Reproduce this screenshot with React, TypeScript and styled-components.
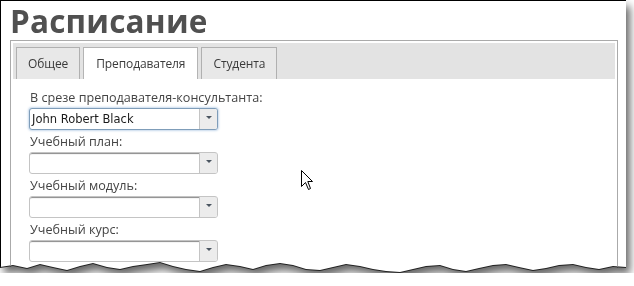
import React from "react";
import styled, { createGlobalStyle } from "styled-components";

const GlobalStyle = createGlobalStyle`
  body {
    margin: 0;
    background: #fff;
  }
`;

// jagged torn-paper bottom edge
const tornPoints = (() => {
	const pts: string[] = ["0 0", "626px 0"];
	const ys = [267, 265, 268, 264, 267, 270, 266, 263, 267, 269, 266, 264, 262, 266, 269, 271, 267, 264, 266, 269, 265, 263, 265, 269, 270, 267, 264, 266, 269, 271, 272, 269, 266, 265, 269, 271, 268, 265, 264, 267, 270, 268, 265, 264, 267, 269, 266, 267];
	const n = ys.length;
	for (let i = n - 1; i >= 0; i--) {
		const x = Math.round((626 * i) / (n - 1));
		pts.push(`${x}px ${ys[i]}px`);
	}
	return pts.join(", ");
})();

interface Field {
	label: string,
	value?: string,
	focused?: boolean
}

const fields: Field[] = [
	{ label: "В срезе преподавателя-консультанта:", value: "John Robert Black", focused: true },
	{ label: "Учебный план:" },
	{ label: "Учебный модуль:" },
	{ label: "Учебный курс:" },
];

const tabs = ["Общее", "Преподавателя", "Студента"];

const App = () => {
	return (
		<>
			<GlobalStyle />
			<Frame>
				<Paper>
					<Title>Расписание</Title>
					<TabsBox>
						<TabBar>
							{tabs.map((t) => (
								<Tab key={t} $active={t === "Преподавателя"}>{t}</Tab>
							))}
						</TabBar>
						<Panel>
							{fields.map((f) => (
								<FieldRow key={f.label}>
									<FieldLabel>{f.label}</FieldLabel>
									<Select $focused={!!f.focused}>
										<SelectText>{f.value}</SelectText>
										<ArrowButton>
											<Triangle />
										</ArrowButton>
									</Select>
								</FieldRow>
							))}
						</Panel>
					</TabsBox>
					<Cursor width="13" height="21" viewBox="0 0 13 21">
						<path d="M0.5 0.5 L0.5 16.5 L4.5 12.5 L7.5 19.5 L9.5 18.5 L6.8 11.5 L11.5 11.5 Z" fill="#fff" stroke="#000" strokeWidth="1" />
					</Cursor>
				</Paper>
			</Frame>
		</>
	)
};

const Frame = styled.div`
  width: 626px;
  filter: drop-shadow(0 1px 0 #222) drop-shadow(4px 6px 4px rgba(0, 0, 0, 0.6));
`;

const Paper = styled.div`
  position: relative;
  height: 273px;
  box-sizing: border-box;
  background: #fff;
  border-left: 1px solid #000;
  border-top: 1px solid #000;
  padding: 0 8px 0 9px;
  overflow: hidden;
  clip-path: polygon(${tornPoints});
`;

const Title = styled.h1`
  margin: 0;
  padding-top: 1px;
  font-family: "Open Sans", "DejaVu Sans", sans-serif;
  font-weight: 700;
  font-size: 31.5px;
  line-height: 38px;
  color: #505050;
  letter-spacing: 0.2px;
`;

const TabsBox = styled.div`
  border: 1px solid #aaa;
  border-bottom: none;
  padding: 2px 2px 0;
  height: 260px;
  box-sizing: border-box;
`;

const TabBar = styled.div`
  display: flex;
  align-items: flex-end;
  gap: 3px;
  height: 36px;
  box-sizing: border-box;
  padding: 4px 3px 0;
  background: #e3e3e3;
`;

const Tab = styled.div<{ $active: boolean }>`
  height: 32px;
  box-sizing: border-box;
  padding: 0 ${(p) => (p.$active ? "12px" : "11px")};
  display: flex;
  align-items: center;
  border: 1px solid ${(p) => (p.$active ? "#b4b4b4" : "#b0b0b0")};
  border-bottom: none;
  background: ${(p) => (p.$active ? "#fff" : "#e8e8e8")};
  font-family: "Open Sans", "DejaVu Sans", sans-serif;
  font-size: 12px;
  color: #3a3a3a;
  letter-spacing: -0.1px;
`;

const Panel = styled.div`
  padding: 9px 0 0 17px;
  display: flex;
  flex-direction: column;
`;

const FieldRow = styled.div`
  display: flex;
  flex-direction: column;
  margin-bottom: 2px;
`;

const FieldLabel = styled.div`
  font-family: "Open Sans", "DejaVu Sans", sans-serif;
  font-size: 12.6px;
  line-height: 20px;
  color: #444;
`;

const Select = styled.div<{ $focused: boolean }>`
  width: 189px;
  height: 22px;
  box-sizing: border-box;
  margin-left: -1px;
  display: flex;
  border: 1px solid ${(p) => (p.$focused ? "#7f9db9" : "#c4c4c4")};
  border-radius: 3px;
  background: #fff;
  box-shadow: ${(p) =>
		p.$focused
			? "0 0 2px 1px rgba(130, 170, 210, 0.45)"
			: "inset 0 2px 1px -1px #8a8a8a"};
  overflow: hidden;
`;

const SelectText = styled.div`
  flex: 1;
  padding-left: 2px;
  font-family: "DejaVu Sans", Verdana, sans-serif;
  font-size: 11.5px;
  line-height: 20px;
  color: #1a1a1a;
`;

const ArrowButton = styled.div`
  width: 17px;
  display: flex;
  align-items: center;
  justify-content: center;
  border-left: 1px solid #c4c4c4;
  background: #ececec;
`;

const Triangle = styled.span`
  width: 0;
  height: 0;
  border-left: 3px solid transparent;
  border-right: 3px solid transparent;
  border-top: 3px solid #4a5560;
  margin-top: -3px;
`;

const Cursor = styled.svg`
  position: absolute;
  left: 300px;
  top: 169px;
`;

export default App;
